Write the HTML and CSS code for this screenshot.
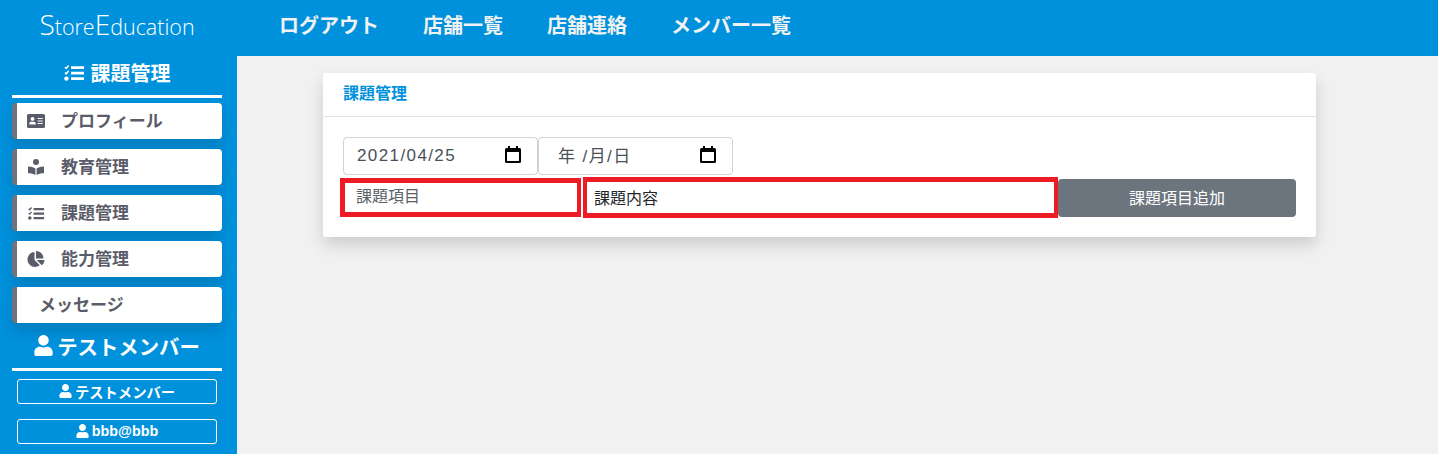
FILE: index.html
```html
<!DOCTYPE html>
<html lang="ja">
<head>
	<meta charset="UTF-8">
	<title>StoreEducation</title>
	<link rel="stylesheet" href="styles.css">
</head>
<body>
	<svg class="defs">
		<symbol id="i-tasks" viewBox="0 0 20 16">
			<path d="M1 2.2l1.2 1.2L4.6.6M1 7.6l1.2 1.2L4.6 6" fill="none" stroke="currentColor" stroke-width="1.5"/>
			<circle cx="2.4" cy="13.6" r="2.2"/>
			<path d="M7 1.2h13v2.8H7zM7 6.700h13v2.800H7zM7 12.300h13v2.800H7z"/>
		</symbol>
		<symbol id="i-card" viewBox="0 0 18 14">
			<path fill-rule="evenodd" d="M1.5 0h15A1.5 1.5 0 0 1 18 1.5v11a1.5 1.5 0 0 1-1.5 1.5h-15A1.5 1.5 0 0 1 0 12.500v-11A1.500 1.500 0 0 1 1.500 0zM5.500 3a1.900 1.900 0 1 0 0 3.800 1.900 1.900 0 0 0 0-3.800zM2.300 10.600h6.400V9.500c0-1-.8-1.800-1.800-1.800H4.100c-1 0-1.800.8-1.800 1.800zM10.700 4v1h5V4zm0 2.500v1h5v-1zm0 2.500v1h5V9z"/>
		</symbol>
		<symbol id="i-book" viewBox="0 0 16 16">
			<circle cx="8" cy="3" r="3"/>
			<path d="M0 7.500c3 0 5.500.7 7.400 2V16C5.500 14.800 3 14.200 0 14.200zM16 7.500c-3 0-5.500.7-7.400 2V16c1.900-1.200 4.400-1.800 7.400-1.800z"/>
		</symbol>
		<symbol id="i-pie" viewBox="0 0 544 512">
			<path d="M527.79 288H290.5l158.03 158.03c6.04 6.04 15.98 6.53 22.19.68 38.7-36.46 65.32-85.61 73.13-140.86 1.34-9.46-6.51-17.85-16.06-17.85zm-15.83-64.8C503.72 103.74 408.26 8.28 288.8.04 279.68-.59 272 7.1 272 16.24V240h223.77c9.14 0 16.82-7.68 16.19-16.8zM224 288V50.71c0-9.55-8.39-17.4-17.84-16.06C86.99 51.49-4.1 155.6.14 280.37 4.5 408.51 114.83 513.59 243.03 511.98c50.4-.63 96.97-16.87 135.26-44.03 7.9-5.6 8.42-17.23 1.57-24.08L224 288z"/>
		</symbol>
		<symbol id="i-user" viewBox="0 0 448 512">
			<path d="M224 256c70.7 0 128-57.3 128-128S294.7 0 224 0 96 57.3 96 128s57.3 128 128 128zm89.6 32h-16.7c-22.2 10.2-46.9 16-72.9 16s-50.6-5.8-72.9-16h-16.7C60.2 288 0 348.2 0 422.4V464c0 26.5 21.5 48 48 48h352c26.5 0 48-21.5 48-48v-41.6c0-74.2-60.2-134.4-134.4-134.400z"/>
		</symbol>
		<symbol id="i-cal" viewBox="0 0 16 17">
			<path fill-rule="evenodd" d="M3 0h2v2h6V0h2v2h1.500A1.500 1.500 0 0 1 16 3.500v12a1.500 1.500 0 0 1-1.500 1.500h-13A1.500 1.500 0 0 1 0 15.500v-12A1.500 1.500 0 0 1 1.500 2H3zM2 6v9h12V6z"/>
		</symbol>
	</svg>

	<header class="topbar">
		<a class="logo" href="#"><span class="cap">S</span>tore<span class="cap">E</span>ducation</a>
		<nav class="topnav">
			<a href="#">ログアウト</a>
			<a href="#">店舗一覧</a>
			<a href="#">店舗連絡</a>
			<a href="#">メンバー一覧</a>
		</nav>
	</header>

	<div class="wrap">
		<aside class="side">
			<div class="side-title"><svg class="ic-tasks"><use href="#i-tasks"/></svg>課題管理</div>
			<ul class="menu">
				<li><svg class="ic"><use href="#i-card"/></svg><span>プロフィール</span></li>
				<li class="tight"><svg class="ic"><use href="#i-book"/></svg><span>教育管理</span></li>
				<li class="tight"><svg class="ic ic-small"><use href="#i-tasks"/></svg><span>課題管理</span></li>
				<li><svg class="ic"><use href="#i-pie"/></svg><span>能力管理</span></li>
				<li class="noicon"><span>メッセージ</span></li>
			</ul>
			<div class="side-title member"><svg class="ic-user"><use href="#i-user"/></svg>テストメンバー</div>
			<div class="tag"><svg><use href="#i-user"/></svg>テストメンバー</div>
			<div class="tag"><svg><use href="#i-user"/></svg>bbb@bbb</div>
		</aside>

		<main class="main">
			<section class="card">
				<div class="card-head">課題管理</div>
				<div class="card-body">
					<div class="date-row">
						<div class="date-box"><span>2021/04/25</span><svg><use href="#i-cal"/></svg></div>
						<div class="date-box empty"><span>年 /月/日</span><svg><use href="#i-cal"/></svg></div>
					</div>
					<form class="add-row">
						<input class="red-input item" type="text" placeholder="課題項目">
						<input class="red-input body-text" type="text" value="課題内容">
						<button class="add-btn" type="button">課題項目追加</button>
					</form>
				</div>
			</section>
		</main>
	</div>
</body>
</html>
```

FILE: styles.css
```css
*{margin:0;padding:0;box-sizing:border-box;list-style:none;text-decoration:none;}
html,body{height:454px;overflow:hidden;}
body{font-family:"Liberation Sans","Noto Sans CJK JP",sans-serif;background:#f1f1f1;color:#212529;}
.defs{display:none;}
svg{fill:currentColor;}

.topbar{height:56px;background:#0091dd;display:flex;align-items:center;}
.logo{width:234px;text-align:center;color:#fff;font-family:"Open Sans",sans-serif;font-weight:300;font-size:21.500px;line-height:48px;height:56px;margin-right:3px;}
.logo .cap{font-size:28px;}
.topnav{display:flex;gap:44px;padding-left:42px;}
.topnav a{color:#f2f2f2;font-size:20px;font-weight:700;line-height:26px;margin-top:-4px;}

.wrap{display:flex;height:398px;}
.side{width:237px;background:#0091dd;padding:0 15px 0 12px;color:#fff;}
.side-title{height:42px;border-bottom:3px solid #fff;font-size:20px;font-weight:700;display:flex;align-items:center;justify-content:center;gap:7px;padding-bottom:6px;}
.ic-tasks{width:20px;height:16px;}
.ic-user{width:19px;height:21px;margin-right:-2px;}
.side-title.member{height:40px;padding-bottom:8px;margin-top:8px;gap:6px;font-size:20.400px;}

.menu{margin-top:5px;display:flex;flex-direction:column;gap:10px;}
.menu li{height:36px;width:210px;background:#fff;border-left:5px solid #6c757d;border-radius:4px;box-shadow:0 8px 16px rgba(0,0,0,.15);display:flex;align-items:center;padding-left:10px;color:#5a5c69;font-size:17px;font-weight:700;}
.menu li span{padding-bottom:4px;}
.menu .ic{width:18px;height:16px;margin-right:16px;flex:none;}
.menu .ic-small{height:13px;}
.menu li.noicon{padding-left:22px;}

.tag{width:200px;height:25px;margin:8px 0 15px 5px;border:1px solid #fff;border-radius:3px;display:flex;align-items:center;justify-content:center;gap:3px;padding-bottom:1px;font-size:14.300px;font-weight:700;color:#fff;}
.tag svg{width:13px;height:14px;}
.tag + .tag{margin-top:0;}

.main{flex:1;padding:17px 122px 0 86px;}
.card{background:#fff;height:164px;border-radius:3px;box-shadow:0 8px 16px rgba(0,0,0,.15);}
.card-head{height:44px;border-bottom:1px solid #dfe2e6;padding-left:20px;font-size:16px;font-weight:700;line-height:41px;color:#0091dd;}
.card-body{padding:20px 20px 0;}
.date-row{display:flex;}
.date-box{width:195px;height:38px;border:1px solid #ced4da;border-radius:4px;display:flex;align-items:center;justify-content:space-between;padding:0 16px 0 13px;font-size:17px;letter-spacing:1.400px;color:#495057;}
.date-box svg{width:16px;height:17px;color:#000;margin-top:-3px;}
.date-box.empty{padding-left:19px;}
.date-box.empty span{padding-bottom:4px;}
.add-row{display:flex;align-items:center;margin:2px 0 0 -3px;}
.red-input{border:solid #ed1c24;font-family:inherit;font-size:16px;outline:none;background:#fff;}
.red-input.item{width:241px;height:39px;border-width:5px 4px 5px 5px;padding:0 0 2px 11px;}
.red-input.item::placeholder{color:#5a6268;opacity:1;}
.red-input.body-text{width:475px;height:41px;margin-left:2px;border-width:5px 4px;padding:0 0 2px 7px;color:#212529;}
.add-btn{width:238px;height:38px;background:#6c757d;color:#fff;border:none;border-radius:4px;font-family:inherit;font-size:16px;padding-bottom:2px;}
```
